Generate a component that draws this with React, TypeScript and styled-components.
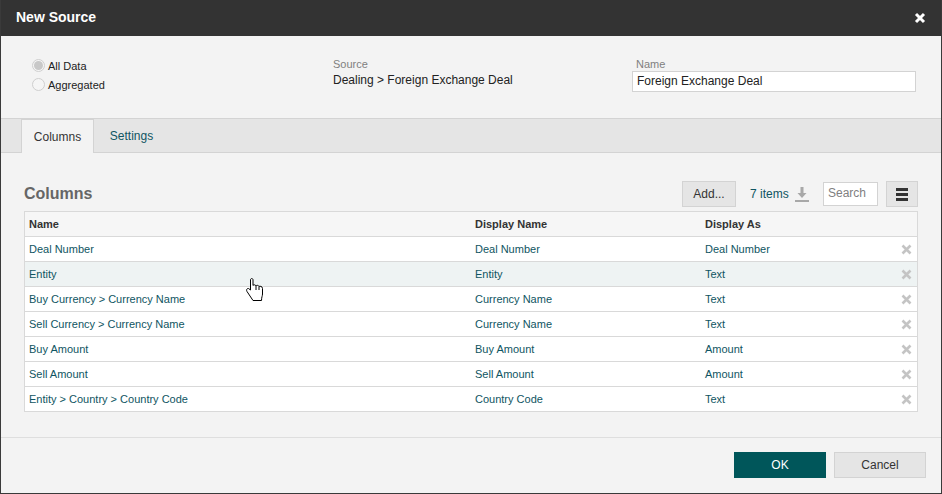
import React from 'react';
import styled, { createGlobalStyle } from 'styled-components';

const GlobalStyle = createGlobalStyle`
  html, body {
    margin: 0;
    padding: 0;
    background: #f3f3f3;
  }
  * {
    box-sizing: border-box;
  }
  body {
    font-family: "Liberation Sans", Arial, sans-serif;
  }
`;

const Dialog = styled.div`
  position: relative;
  width: 942px;
  height: 494px;
  background: #f3f3f3;
  border: 1px solid #3a3a3a;
  border-top: 0;
  display: flex;
  flex-direction: column;
  overflow: hidden;
`;

const TitleBar = styled.div`
  height: 36px;
  flex: none;
  margin: 0 -1px;
  padding: 0 16px;
  background: #333333;
  display: flex;
  align-items: center;
  justify-content: space-between;
`;

const Title = styled.div`
  color: #fff;
  font-size: 14px;
  font-weight: 700;
  margin-top: -2px;
`;

const CloseIcon = styled.svg`
  width: 12px;
  height: 12px;
`;

const SourceForm = styled.div`
  height: 82px;
  flex: none;
  display: grid;
  grid-template-columns: 301px 299px 284px;
  padding: 22px 0 0 31px;
`;

const RadioGroup = styled.div`
  display: flex;
  flex-direction: column;
  gap: 6px;
  padding-top: 1px;
`;

const RadioRow = styled.label`
  display: flex;
  align-items: center;
  gap: 3px;
  height: 13px;
  font-size: 11px;
  color: #222;
`;

const RadioCircle = styled.span<{ $checked?: boolean }>`
  width: 13px;
  height: 13px;
  border-radius: 50%;
  border: 1px solid #cfcfcf;
  background: #f5f5f5;
  display: flex;
  align-items: center;
  justify-content: center;

  &::after {
    content: '';
    width: 9px;
    height: 9px;
    border-radius: 50%;
    background: ${p => (p.$checked ? '#c8c8c8' : 'transparent')};
  }
`;

const Field = styled.div`
  display: flex;
  flex-direction: column;
`;

const FieldLabel = styled.div`
  font-size: 11px;
  line-height: 13px;
  color: #808080;
  padding-left: 4px;
`;

const SourceLabel = styled(FieldLabel)`
  padding-left: 0;
`;

const SourceValue = styled.div`
  font-size: 12px;
  line-height: 15px;
  margin-top: 2px;
  color: #222;
`;

const NameInput = styled.div`
  width: 284px;
  height: 21px;
  background: #fff;
  border: 1px solid #d3d3d3;
  font-size: 12px;
  line-height: 19px;
  padding-left: 4px;
  color: #222;
`;

const TabBar = styled.div`
  height: 35px;
  flex: none;
  background: #e5e5e5;
  border-top: 1px solid #d3d3d3;
  border-bottom: 1px solid #d3d3d3;
  display: flex;
  padding-left: 20px;
`;

const Tab = styled.div<{ $active?: boolean }>`
  width: ${p => (p.$active ? '73px' : '75px')};
  height: 34px;
  font-size: 12px;
  display: flex;
  align-items: center;
  justify-content: center;
  color: ${p => (p.$active ? '#333' : '#0f5562')};
  background: ${p => (p.$active ? '#f3f3f3' : 'transparent')};
  border: ${p => (p.$active ? '1px solid #d3d3d3' : '0')};
  border-bottom: 0;
`;

const Content = styled.div`
  flex: 1;
  padding: 25px 23px 0;
`;

const Toolbar = styled.div`
  height: 32px;
  display: flex;
  align-items: center;
`;

const SectionTitle = styled.div`
  flex: 1;
  font-size: 16px;
  font-weight: 700;
  color: #666;
`;

const GreyButton = styled.button`
  font-family: inherit;
  background: #e5e5e5;
  border: 1px solid #d3d3d3;
  color: #333;
  font-size: 12px;
  padding: 0;
`;

const AddButton = styled(GreyButton)`
  width: 54px;
  height: 26px;
`;

const ItemCount = styled.div`
  margin-left: 14px;
  font-size: 12px;
  color: #0f5562;
  width: 45px;
`;

const DownloadIcon = styled.svg`
  width: 14px;
  height: 15px;
  margin-right: 14px;
`;

const SearchBox = styled.div`
  width: 55px;
  height: 24px;
  background: #fff;
  border: 1px solid #d3d3d3;
  font-size: 12px;
  line-height: 20px;
  padding-left: 4px;
  color: #808080;
`;

const MenuButton = styled(GreyButton)`
  width: 32px;
  height: 26px;
  margin-left: 8px;
  display: flex;
  align-items: center;
  justify-content: center;
`;

const Table = styled.div`
  width: 894px;
  margin-top: 1px;
  border: 1px solid #d9d9d9;
  border-bottom: 0;
  background: #fff;
`;

const Row = styled.div<{ $head?: boolean; $hover?: boolean }>`
  height: 25px;
  display: grid;
  grid-template-columns: 446px 230px 1fr 11px;
  align-items: center;
  padding: 0 5px 0 4px;
  font-size: 11px;
  border-bottom: 1px solid #d9d9d9;
  color: ${p => (p.$head ? '#333' : '#0f5562')};
  font-weight: ${p => (p.$head ? 700 : 400)};
  background: ${p => (p.$head ? '#f6f6f6' : p.$hover ? '#eef3f3' : '#fff')};
`;

const RemoveIcon = styled.svg`
  width: 11px;
  height: 11px;
`;

const Footer = styled.div`
  height: 56px;
  flex: none;
  border-top: 1px solid #dedede;
  display: flex;
  justify-content: flex-end;
  gap: 8px;
  padding: 14px 15px 0 0;
`;

const OkButton = styled.button`
  width: 92px;
  height: 26px;
  font-family: inherit;
  font-size: 12px;
  font-weight: 400;
  color: #fff;
  background: #00565a;
  border: 0;
`;

const CancelButton = styled(GreyButton)`
  width: 92px;
  height: 26px;
`;

const HandCursor = styled.svg`
  position: absolute;
  left: 245px;
  top: 278px;
  width: 18px;
  height: 24px;
`;

const rows = [
  ['Deal Number', 'Deal Number', 'Deal Number'],
  ['Entity', 'Entity', 'Text'],
  ['Buy Currency > Currency Name', 'Currency Name', 'Text'],
  ['Sell Currency > Currency Name', 'Currency Name', 'Text'],
  ['Buy Amount', 'Buy Amount', 'Amount'],
  ['Sell Amount', 'Sell Amount', 'Amount'],
  ['Entity > Country > Country Code', 'Country Code', 'Text'],
];

export default function App() {
  return (
    <>
      <GlobalStyle />
      <Dialog>
        <TitleBar>
          <Title>New Source</Title>
          <CloseIcon viewBox="0 0 12 12">
            <path d="M2 2l8 8M10 2l-8 8" stroke="#fff" strokeWidth="3" />
          </CloseIcon>
        </TitleBar>

        <SourceForm>
          <RadioGroup>
            <RadioRow><RadioCircle $checked />All Data</RadioRow>
            <RadioRow><RadioCircle />Aggregated</RadioRow>
          </RadioGroup>
          <Field>
            <SourceLabel>Source</SourceLabel>
            <SourceValue>Dealing &gt; Foreign Exchange Deal</SourceValue>
          </Field>
          <Field>
            <FieldLabel>Name</FieldLabel>
            <NameInput>Foreign Exchange Deal</NameInput>
          </Field>
        </SourceForm>

        <TabBar>
          <Tab $active>Columns</Tab>
          <Tab>Settings</Tab>
        </TabBar>

        <Content>
          <Toolbar>
            <SectionTitle>Columns</SectionTitle>
            <AddButton>Add...</AddButton>
            <ItemCount>7 items</ItemCount>
            <DownloadIcon viewBox="0 0 14 15">
              <path d="M5.500 0h3v6h3L7 11 2.500 6h3z" fill="#a8a8a8" />
              <rect y="13" width="14" height="2" fill="#a8a8a8" />
            </DownloadIcon>
            <SearchBox>Search</SearchBox>
            <MenuButton>
              <svg width="12" height="13" viewBox="0 0 12 13">
                <rect width="12" height="3" fill="#333" />
                <rect y="5" width="12" height="3" fill="#333" />
                <rect y="10" width="12" height="3" fill="#333" />
              </svg>
            </MenuButton>
          </Toolbar>

          <Table>
            <Row $head>
              <div>Name</div>
              <div>Display Name</div>
              <div>Display As</div>
              <div />
            </Row>
            {rows.map((r, i) => (
              <Row key={i} $hover={i === 1}>
                <div>{r[0]}</div>
                <div>{r[1]}</div>
                <div>{r[2]}</div>
                <RemoveIcon viewBox="0 0 11 11">
                  <path d="M1.500 1.500l8 8M9.500 1.500l-8 8" stroke="#c4c4c4" strokeWidth="2.600" />
                </RemoveIcon>
              </Row>
            ))}
          </Table>
        </Content>

        <Footer>
          <OkButton>OK</OkButton>
          <CancelButton>Cancel</CancelButton>
        </Footer>

        <HandCursor viewBox="0 0 18 24">
          <path
            d="M4.500 12V2C4.500 0 7 0 7 2V7.500C7.500 6.500 9.500 6.500 10 8C10.500 7 12.500 7 13 8.500C13.500 8 16.500 8 16.500 10.500V16C16.500 18 15.500 19 15.500 22.500H7L1 13.500C0 12 1 10 2.500 10.500Z"
            fill="#fff"
            stroke="#000"
            strokeWidth="1"
          />
          <path d="M10 8V12M13 8.500V12" stroke="#000" strokeWidth="1" fill="none" />
        </HandCursor>
      </Dialog>
    </>
  );
}
